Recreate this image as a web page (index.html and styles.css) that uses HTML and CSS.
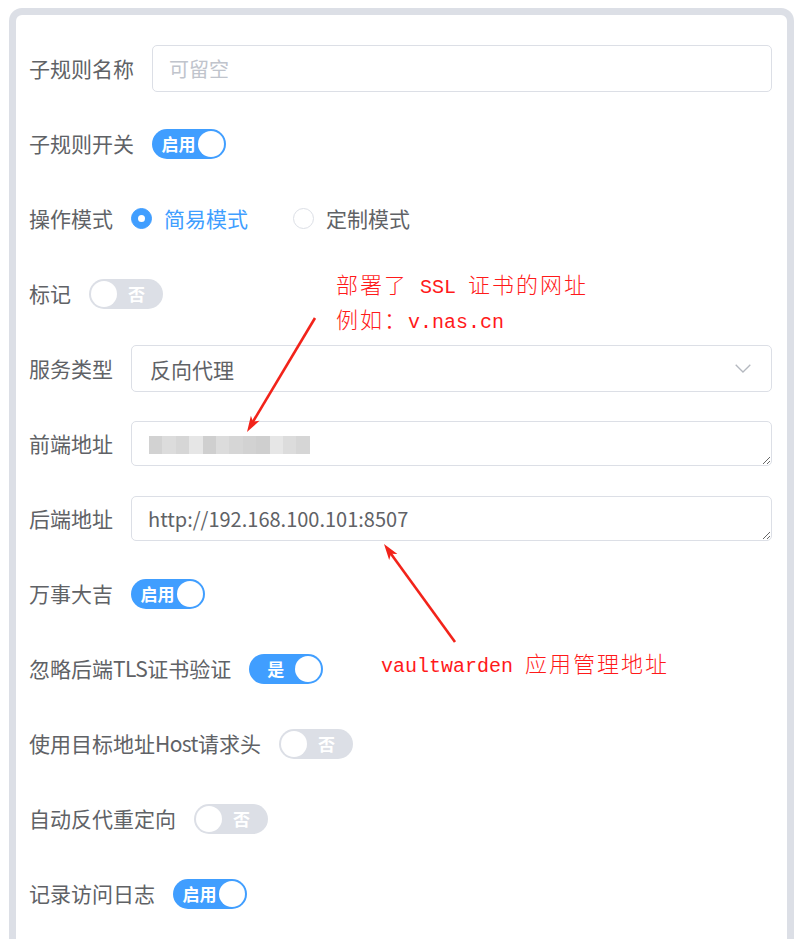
FILE: index.html
```html
<!DOCTYPE html>
<html lang="zh-CN">
<head>
<meta charset="utf-8">
<title>子规则</title>
<link rel="stylesheet" href="styles.css">
</head>
<body>
<div class="card">
  <div class="row">
    <label class="lbl">子规则名称</label>
    <div class="ctl"><input class="inp" type="text" placeholder="可留空"></div>
  </div>
  <div class="row">
    <label class="lbl">子规则开关</label>
    <div class="sw on"><span class="txt">启用</span><span class="knob"></span></div>
  </div>
  <div class="row">
    <label class="lbl">操作模式</label>
    <div class="radios">
      <span class="radio checked"><span class="dot"></span>简易模式</span>
      <span class="radio"><span class="dot"></span>定制模式</span>
    </div>
  </div>
  <div class="row">
    <label class="lbl">标记</label>
    <div class="sw off"><span class="knob"></span><span class="txt">否</span></div>
  </div>
  <div class="row">
    <label class="lbl">服务类型</label>
    <div class="sel">
      <span>反向代理</span>
      <svg class="chev" width="16" height="9" viewBox="0 0 16 9"><polyline points="0.7,0.7 8,8 15.3,0.7" fill="none" stroke="#b4b8bf" stroke-width="1.3"/></svg>
    </div>
  </div>
  <div class="row">
    <label class="lbl">前端地址</label>
    <div class="ctl">
      <div class="ta blurred">
        <div class="blurline">
          <span class="g1"></span><span class="g2"></span><span class="g3"></span><span class="g4"></span><span class="g5"></span><span class="g2"></span><span class="g3"></span><span class="g1"></span><span class="g5"></span><span class="g4"></span><span class="g2"></span><span class="g3"></span>
        </div>
      </div>
    </div>
  </div>
  <div class="row">
    <label class="lbl">后端地址</label>
    <div class="ctl"><textarea class="ta" rows="1">http://192.168.100.101:8507</textarea></div>
  </div>
  <div class="row">
    <label class="lbl">万事大吉</label>
    <div class="sw on"><span class="txt">启用</span><span class="knob"></span></div>
  </div>
  <div class="row">
    <label class="lbl">忽略后端<span class="lat">TLS</span>证书验证</label>
    <div class="sw on"><span class="txt">是</span><span class="knob"></span></div>
  </div>
  <div class="row">
    <label class="lbl">使用目标地址<span class="lat">Host</span>请求头</label>
    <div class="sw off"><span class="knob"></span><span class="txt">否</span></div>
  </div>
  <div class="row">
    <label class="lbl">自动反代重定向</label>
    <div class="sw off"><span class="knob"></span><span class="txt">否</span></div>
  </div>
  <div class="row">
    <label class="lbl">记录访问日志</label>
    <div class="sw on"><span class="txt">启用</span><span class="knob"></span></div>
  </div>
</div>

<div class="note note1">部署了<span class="mono"> SSL </span>证书的网址<br>例如：<span class="mono">v.nas.cn</span></div>
<div class="note note2"><span class="mono">vaultwarden </span>应用管理地址</div>

<svg class="arrows" width="798" height="939" viewBox="0 0 798 939">
  <line x1="315" y1="318" x2="252.5" y2="422.5" stroke="#f2231a" stroke-width="2.6"/>
  <polygon points="247,432 259.5,420.8 253.1,421.7 250.9,415.7" fill="#f2231a"/>
  <line x1="455" y1="642" x2="390" y2="552.5" stroke="#f2231a" stroke-width="2.6"/>
  <polygon points="384,544 397.4,554.1 391,553.8 389.2,559.9" fill="#f2231a"/>
</svg>
</body>
</html>
```
FILE: styles.css
```css
* { box-sizing: border-box; }

html, body { background: #ffffff; }

body {
  margin: 8px 4px 0 9px;
  font-family: "Noto Sans CJK SC", "Noto Sans", sans-serif;
  color: #606266;
}

.card {
  border: 7px solid #dcdfe6;
  border-bottom: none;
  border-radius: 13px 13px 0 0;
  padding: 30px 15px 40px 13px;
  background: #fff;
}

.row {
  display: flex;
  align-items: center;
  min-height: 47px;
  margin-bottom: 28px;
}

.lbl {
  font-size: 21px;
  line-height: 47px;
  color: #606266;
  padding-right: 18px;
  white-space: nowrap;
}

.lat { letter-spacing: -0.6px; }

.ctl { flex: 1; display: flex; }

.inp {
  width: 100%;
  height: 47px;
  border: 1px solid #dcdfe6;
  border-radius: 5px;
  padding: 0 16px;
  font-family: inherit;
  font-size: 20px;
  color: #606266;
  outline: none;
  background: #fff;
}
.inp::placeholder { color: #c0c4cc; }

/* switch */
.sw {
  display: flex;
  align-items: center;
  width: 74px;
  height: 30px;
  border-radius: 15px;
  padding: 2px;
  background: #409eff;
}
.sw .txt {
  flex: 1;
  text-align: center;
  color: #fff;
  font-size: 17px;
  font-weight: 700;
  line-height: 26px;
}
.sw .knob {
  width: 26px;
  height: 26px;
  border-radius: 50%;
  background: #fff;
  flex: none;
}
.sw.on .txt { padding-left: 5px; }
.sw.off { background: #dcdfe6; }
.sw.off .txt { padding-right: 5px; }

/* radios */
.radios { display: flex; align-items: center; }
.radio {
  display: flex;
  align-items: center;
  font-size: 21px;
  line-height: 47px;
  color: #606266;
  margin-right: 45px;
}
.radio .dot {
  width: 21px;
  height: 21px;
  border-radius: 50%;
  border: 1px solid #dcdfe6;
  background: #fff;
  margin-right: 12px;
  display: flex;
  align-items: center;
  justify-content: center;
}
.radio.checked { color: #409eff; }
.radio.checked .dot { background: #409eff; border-color: #409eff; }
.radio.checked .dot::after {
  content: "";
  width: 7px;
  height: 7px;
  border-radius: 50%;
  background: #fff;
}

/* select */
.sel {
  flex: 1;
  height: 47px;
  display: flex;
  align-items: center;
  justify-content: space-between;
  border: 1px solid #dcdfe6;
  border-radius: 5px;
  padding: 0 20px 0 18px;
  font-size: 21px;
  color: #606266;
}
.chev { display: block; }

/* textareas */
.ta {
  display: block;
  width: 100%;
  height: 45px;
  border: 1px solid #dcdfe6;
  border-radius: 5px;
  padding: 8px 16px;
  font-family: inherit;
  font-size: 20px;
  line-height: 27px;
  color: #606266;
  resize: vertical;
  overflow: auto;
  outline: none;
  background: #fff;
}
.ta.blurred { padding: 14px 16px 0 17px; overflow: hidden; }

.blurline { display: flex; height: 18px; }
.blurline span { width: 13.4px; height: 18px; }
.g1 { background: #d2d2d2; }
.g2 { background: #dcdcdc; }
.g3 { background: #d6d6d6; }
.g4 { background: #e6e6e6; }
.g5 { background: #cfcfcf; }

/* annotations overlay */
.note {
  position: absolute;
  color: #ff1a1a;
  font-family: "Noto Sans CJK SC", sans-serif;
  font-size: 22px;
  font-weight: 300;
  letter-spacing: 2px;
  line-height: 30px;
  white-space: nowrap;
}
.note .mono {
  font-family: "Liberation Mono", monospace;
  font-size: 20px;
  font-weight: 400;
  letter-spacing: 0;
}
.note1 { left: 336px; top: 268px; }
.note2 { left: 381px; top: 647px; }

.arrows {
  position: absolute;
  left: 0;
  top: 0;
  pointer-events: none;
}
```
